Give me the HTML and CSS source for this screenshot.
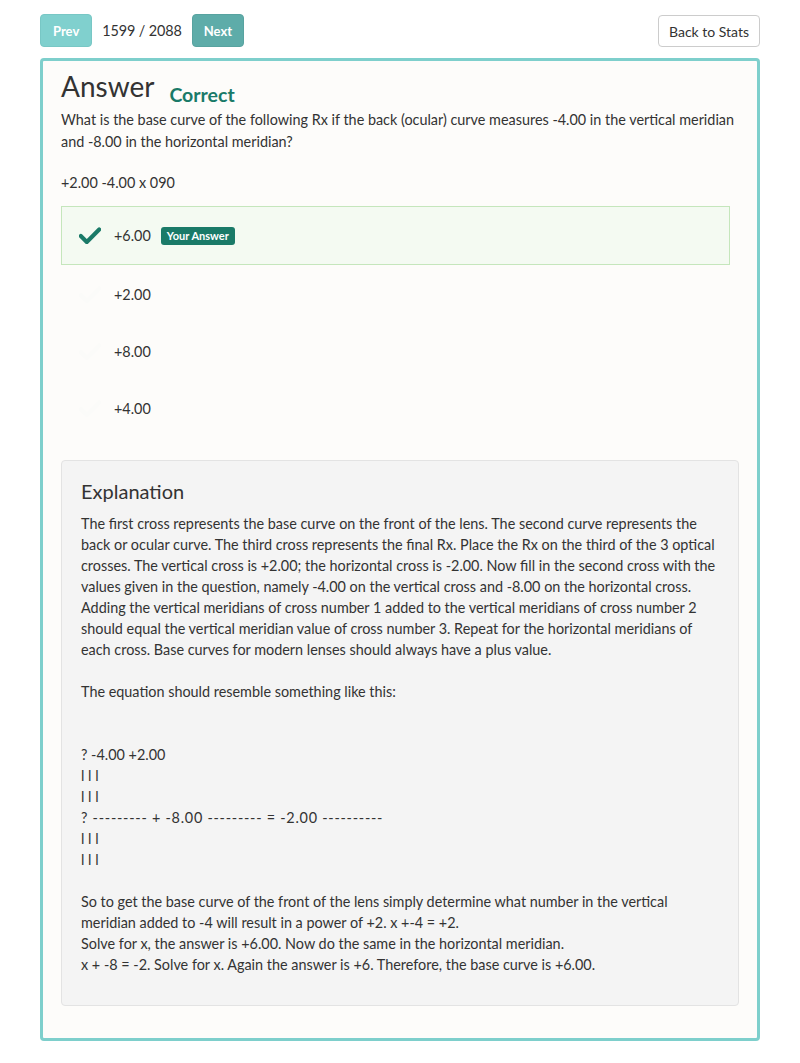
FILE: index.html
```html
<!DOCTYPE html>
<html>
<head>
<meta charset="utf-8">
<link rel="stylesheet" href="styles.css">
</head>
<body>
<div class="page">
  <div class="toolbar">
    <div class="nav">
      <button class="btn btn-prev">Prev</button>
      <span class="counter">1599 / 2088</span>
      <button class="btn btn-next">Next</button>
    </div>
    <button class="btn btn-back">Back to Stats</button>
  </div>
  <div class="card">
    <div class="title-row">
      <h1 class="title">Answer</h1>
      <span class="status">Correct</span>
    </div>
    <p class="question">What is the base curve of the following Rx if the back (ocular) curve measures -4.00 in the vertical meridian and -8.00 in the horizontal meridian?</p>
    <p class="rx">+2.00 -4.00 x 090</p>
    <ul class="choices">
      <li class="choice selected">
        <svg class="check" viewBox="0 0 24 18" width="22" height="17"><path d="M2 9.5 L8.5 16 L22 2.5" fill="none" stroke="currentColor" stroke-width="4.5" stroke-linecap="round" stroke-linejoin="round"/></svg>
        <span class="choice-text">+6.00</span>
        <span class="badge">Your Answer</span>
      </li>
      <li class="choice">
        <svg class="check faint" viewBox="0 0 24 18" width="22" height="17"><path d="M2 9.5 L8.5 16 L22 2.5" fill="none" stroke="currentColor" stroke-width="4.5" stroke-linecap="round" stroke-linejoin="round"/></svg>
        <span class="choice-text">+2.00</span>
      </li>
      <li class="choice">
        <svg class="check faint" viewBox="0 0 24 18" width="22" height="17"><path d="M2 9.5 L8.5 16 L22 2.5" fill="none" stroke="currentColor" stroke-width="4.5" stroke-linecap="round" stroke-linejoin="round"/></svg>
        <span class="choice-text">+8.00</span>
      </li>
      <li class="choice">
        <svg class="check faint" viewBox="0 0 24 18" width="22" height="17"><path d="M2 9.5 L8.5 16 L22 2.5" fill="none" stroke="currentColor" stroke-width="4.5" stroke-linecap="round" stroke-linejoin="round"/></svg>
        <span class="choice-text">+4.00</span>
      </li>
    </ul>
    <div class="explanation">
      <h2 class="exp-title">Explanation</h2>
      <p class="exp-text">The first cross represents the base curve on the front of the lens. The second curve represents the back or ocular curve. The third cross represents the final Rx. Place the Rx on the third of the 3 optical crosses. The vertical cross is +2.00; the horizontal cross is -2.00. Now fill in the second cross with the values given in the question, namely -4.00 on the vertical cross and -8.00 on the horizontal cross. Adding the vertical meridians of cross number 1 added to the vertical meridians of cross number 2 should equal the vertical meridian value of cross number 3. Repeat for the horizontal meridians of each cross. Base curves for modern lenses should always have a plus value.<br><br>The equation should resemble something like this:<br><br><br>? -4.00 +2.00<br>l l l<br>l l l<br><span class="dashes">? --------- + -8.00 --------- = -2.00 ----------</span><br>l l l<br>l l l<br><br>So to get the base curve of the front of the lens simply determine what number in the vertical meridian added to -4 will result in a power of +2. x +-4 = +2.<br>Solve for x, the answer is +6.00. Now do the same in the horizontal meridian.<br>x + -8 = -2. Solve for x. Again the answer is +6. Therefore, the base curve is +6.00.</p>
    </div>
  </div>
</div>
</body>
</html>
```

FILE: styles.css
```css
* { box-sizing: border-box; }
html, body { margin: 0; padding: 0; background: #ffffff; }
body {
  font-family: Lato, "Open Sans", sans-serif;
  color: #333333;
}
.page {
  width: 720px;
  margin: 0 40px;
  padding-top: 14px;
}
.toolbar {
  display: flex;
  justify-content: space-between;
  align-items: flex-start;
  height: 44px;
}
.nav {
  display: flex;
  align-items: center;
  gap: 10px;
}
.btn {
  font-family: Lato, "Open Sans", sans-serif;
  border-radius: 4px;
  cursor: pointer;
}
.btn-prev, .btn-next {
  height: 33px;
  padding: 0 12px;
  color: #ffffff;
  font-weight: 700;
  font-size: 13px;
  border: 1px solid transparent;
}
.btn-next { padding: 0 11px; }
.btn-prev { background: #80d0ce; border-color: #78c7c5; }
.btn-next { background: #5eaca9; border-color: #58a3a0; }
.counter {
  font-size: 14.4px;
  color: #333;
  letter-spacing: -0.1px;
}
.btn-back {
  margin-top: 1px;
  height: 32px;
  width: 102px;
  background: #ffffff;
  border: 1px solid #cccccc;
  color: #333333;
  font-size: 14px;
  padding: 0;
}
.card {
  border: 3px solid #7ecfcc;
  border-radius: 4px;
  background: #fdfcfa;
  padding: 6px 18px 32px;
}
.title-row {
  display: flex;
  align-items: baseline;
  gap: 15px;
  height: 41px;
}
.title {
  margin: 0;
  font-size: 28px;
  font-weight: 400;
  line-height: 38px;
  color: #333;
}
.status {
  font-size: 19.5px;
  font-weight: 700;
  color: #197a68;
  position: relative;
  top: 5px;
}
.question {
  margin: 1px 0 0;
  font-size: 14.4px;
  line-height: 22px;
}
.rx {
  margin: 19px 0 0;
  font-size: 14.4px;
  line-height: 22px;
}
.choices {
  list-style: none;
  margin: 12px 0 0;
  padding: 0;
}
.choice {
  display: flex;
  align-items: center;
  height: 57px;
  margin-right: 9px;
  padding-left: 17px;
  border: 1px solid transparent;
  font-size: 14.4px;
}
.choice.selected {
  height: 59px;
  background: #f4faf2;
  border-color: #c5e6bc;
  margin-bottom: 1px;
}
.check {
  color: #1a7a68;
  margin-right: 13px;
  flex: none;
}
.check.faint { color: #fbfbf9; }
.choice-text { color: #333; }
.badge {
  margin-left: 10px;
  background: #1a7a68;
  color: #ffffff;
  font-size: 11px;
  font-weight: 700;
  padding: 3px 6px;
  border-radius: 3px;
  line-height: 12px;
}
.explanation {
  margin-top: 23px;
  background: #f4f4f4;
  border: 1px solid #e3e3e3;
  border-radius: 4px;
  padding: 17px 22px 30px 19px;
}
.exp-title {
  margin: 0 0 9px;
  font-size: 20px;
  font-weight: 400;
  line-height: 26px;
  color: #333;
}
.exp-text {
  margin: 0;
  font-size: 14.4px;
  line-height: 21px;
  color: #333;
}
.dashes {
  letter-spacing: 0.75px;
}
```
